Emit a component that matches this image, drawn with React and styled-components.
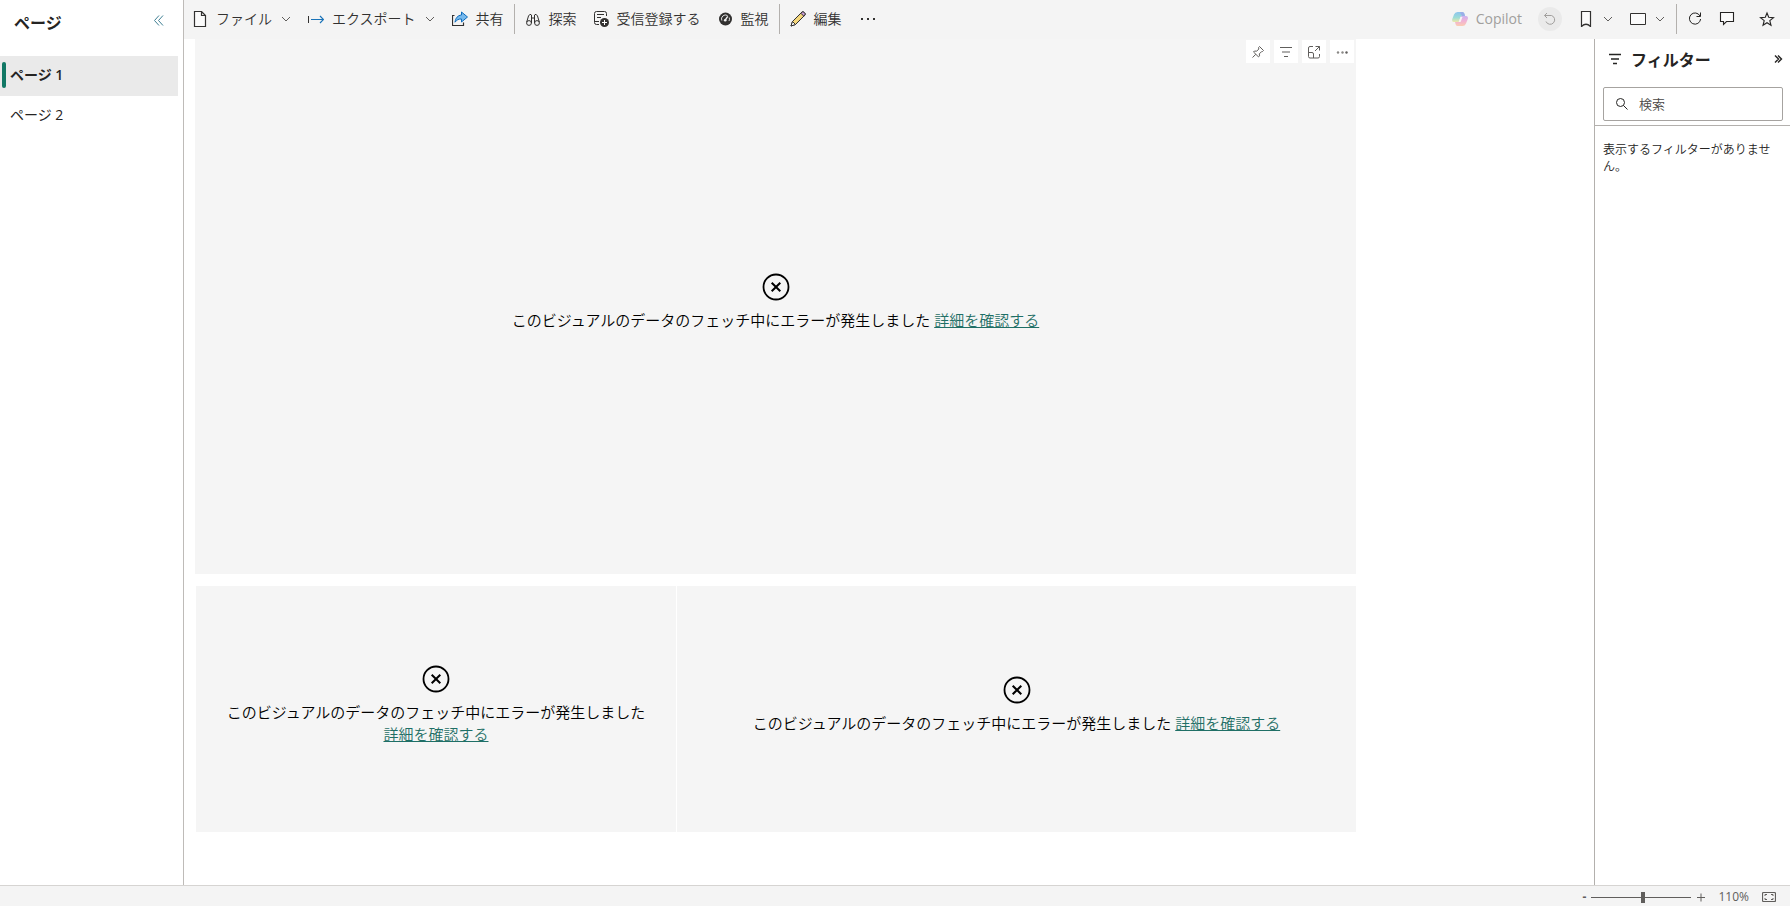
import React from "react";
import styled, { createGlobalStyle, css } from "styled-components";

const GlobalStyle = createGlobalStyle`
  * { box-sizing: border-box; }
  body {
    margin: 0;
    background: #fff;
    color: #252423;
    font-family: "Open Sans", "Noto Sans CJK JP", sans-serif;
    font-size: 14px;
    font-weight: 350;
    line-height: 20px;
  }
  button, input { font: inherit; color: inherit; }
  button { border: 0; padding: 0; background: none; cursor: pointer; }
  svg { display: block; flex: none; }
`;

const Page = styled.div`
  display: flex;
  flex-direction: column;
  min-height: 100vh;
`;

const Body = styled.div`
  display: flex;
  flex: 1;
`;

const Sidebar = styled.nav`
  flex: none;
  width: 184px;
  border-right: 1px solid #bebbb8;
`;

const SidebarHeader = styled.div`
  display: flex;
  align-items: center;
  justify-content: space-between;
  height: 40px;
  margin-bottom: 16px;
  padding: 6px 18px 0 14px;
`;

const SidebarTitle = styled.h2`
  margin: 0;
  font-size: 16px;
  line-height: 24px;
  font-weight: 700;
`;

const PlainButton = styled.button`
  display: flex;
  align-items: center;
  color: ${(p) => p.$color || "#252423"};
  font-weight: ${(p) => (p.$bold ? 700 : "inherit")};
`;

const PageTab = styled.button`
  display: flex;
  align-items: center;
  position: relative;
  width: 178px;
  height: 40px;
  padding: 0 10px 2px;
  font-size: 14px;
  font-weight: 400;
  ${(p) =>
    p.$active &&
    css`
      background: #eaeaea;
      font-weight: 600;
      &::before {
        content: "";
        position: absolute;
        left: 2px;
        top: 6px;
        width: 4px;
        height: 26px;
        border-radius: 2px;
        background: #117865;
      }
    `}
`;

const Main = styled.div`
  display: flex;
  flex: 1;
  flex-direction: column;
  min-width: 0;
`;

const Toolbar = styled.header`
  display: flex;
  align-items: center;
  justify-content: space-between;
  height: 39px;
  padding: 0 7px 1px 0;
  background: #f4f4f4;
`;

const ToolGroup = styled.div`
  display: flex;
  align-items: center;
  height: 38px;
  white-space: nowrap;
`;

const ToolButton = styled.button`
  display: flex;
  align-items: center;
  gap: 8px;
  height: 32px;
  padding: 0 8px;
  color: ${(p) => (p.$muted ? "#a19f9d" : "#323130")};
  font-weight: ${(p) => (p.$muted ? 400 : "inherit")};
`;

const IconButton = styled.button`
  display: flex;
  align-items: center;
  justify-content: center;
  width: 32px;
  height: 32px;
  margin-left: ${(p) => (p.$apart ? "8px" : "0")};
`;

const ResetButton = styled.button`
  display: flex;
  align-items: center;
  justify-content: center;
  width: 24px;
  height: 24px;
  margin: 0 8px;
  border-radius: 50%;
  background: #eaeaea;
  color: #a19f9d;
`;

const Divider = styled.span`
  width: 1px;
  height: 30px;
  margin: 0 2px;
  background: #b3b0ad;
`;

const Workspace = styled.div`
  display: flex;
  flex: 1;
`;

const Canvas = styled.main`
  display: grid;
  flex: 1;
  grid-template-rows: 535fr 246fr;
  gap: 12px;
  min-width: 0;
  padding: 0 238px 53px 11px;
`;

const VisualRow = styled.div`
  display: grid;
  grid-template-columns: 480fr 679fr;
  gap: 1px;
  padding-left: 1px;
`;

const VisualFrame = styled.section`
  position: relative;
  display: flex;
  flex-direction: column;
  align-items: center;
  justify-content: center;
  gap: 8px;
  min-width: 0;
  padding: 0 20px 9px;
  background: #f5f5f5;
  color: #000;
`;

const ErrorText = styled.p`
  margin: 0;
  font-size: 15px;
  line-height: 22px;
  text-align: center;
`;

const DetailLink = styled.a`
  display: inline-block;
  color: #1f6f66;
  text-decoration: underline;
`;

const VisualActions = styled.div`
  position: absolute;
  top: 1px;
  right: 2px;
  display: flex;
  gap: 4px;
`;

const VisualAction = styled.button`
  display: flex;
  align-items: center;
  justify-content: center;
  width: 24px;
  height: 23px;
  background: #fff;
  color: #605e5c;
`;

const FilterPane = styled.aside`
  flex: none;
  width: 196px;
  border-left: 1px solid #b3b0ad;
`;

const FilterHeader = styled.div`
  display: flex;
  align-items: center;
  gap: 9px;
  height: 40px;
  padding: 0 7px 0 13px;
`;

const FilterTitle = styled.h2`
  flex: 1;
  margin: 0;
  padding-top: 2px;
  font-size: 16px;
  line-height: 24px;
  font-weight: 700;
`;

const SearchArea = styled.div`
  padding: 8px 7px 4px 8px;
  border-bottom: 1px solid #b3b0ad;
`;

const SearchBox = styled.label`
  display: flex;
  align-items: center;
  gap: 10px;
  height: 34px;
  padding: 0 11px;
  border: 1px solid #a6a3a0;
  border-radius: 2px;
`;

const SearchInput = styled.input`
  width: 100%;
  min-width: 0;
  padding: 0;
  border: 0;
  outline: 0;
  background: none;
  font-size: 13px;
  &::placeholder { color: #484644; opacity: 1; }
`;

const FilterNote = styled.p`
  margin: 0;
  padding: 15px 9px 0 8px;
  font-size: 12px;
  line-height: 17px;
`;

const StatusBar = styled.footer`
  display: flex;
  align-items: center;
  justify-content: flex-end;
  height: 21px;
  padding: 2px 14px 0 0;
  border-top: 1px solid #d6d4d2;
  background: #f4f4f4;
  color: #605e5c;
  font-size: 12px;
  font-weight: 400;
  line-height: 18px;
`;

const ZoomSlider = styled.input`
  appearance: none;
  width: 100px;
  height: 11px;
  margin: 0 5px;
  background: transparent;
  &::-webkit-slider-runnable-track {
    height: 1px;
    background: #605e5c;
  }
  &::-webkit-slider-thumb {
    appearance: none;
    width: 4px;
    height: 11px;
    margin-top: -5px;
    background: #605e5c;
  }
`;

const ZoomValue = styled.span`
  margin: 0 13px 0 12px;
`;

function Icon({ size = 16, width, height, box, children }) {
  return (
    <svg
      width={width || size}
      height={height || size}
      viewBox={box || `0 0 ${width || size} ${height || size}`}
      fill="none"
      stroke="currentColor"
      aria-hidden="true"
    >
      {children}
    </svg>
  );
}

const Chevron = () => (
  <Icon size={12}><path d="M2 4l4 4 4-4" stroke="#605e5c" /></Icon>
);
const FileIcon = () => (
  <Icon><path d="M2.500.5h7l4 4v11h-11zM9.500.5v4h4" fill="#fff" fillOpacity=".6" strokeWidth="1.200" /></Icon>
);
const ExportIcon = () => (
  <Icon>
    <path d="M.5 5v7" />
    <path d="M3 8.500h12M12 5l3.500 3.500L12 12" stroke="#1a73b8" strokeWidth="1.200" />
  </Icon>
);
const ShareIcon = () => (
  <Icon>
    <path d="M2.500 4.500h-2v10h11v-3" strokeWidth="1.200" />
    <path d="M9.500 1l6 5-6 5V8C6.500 7.800 4.800 9 3 11.200 3.500 7 5.700 4.400 9.500 4z" fill="#76b9ed" stroke="#0f6cbd" />
  </Icon>
);
const ExploreIcon = () => (
  <Icon>
    <path d="M3.500 5Q5 2 6.500 4v3h3V4Q11 2 12.500 5l1.800 6M3.500 5L1.700 11M6.500 7v5M9.500 7v5" />
    <circle cx="4" cy="12" r="2.400" /><circle cx="12" cy="12" r="2.400" />
  </Icon>
);
const SubscribeIcon = () => (
  <Icon>
    <path d="M6 13.500H3.500Q1.500 13.500 1.500 11.500V2.500Q1.500.5 3.500.5h8q2 0 2 2V5M4 3.500h7M4 6.500h4M1.500 10.500H6" />
    <circle cx="11.500" cy="11.500" r="4.500" fill="currentColor" stroke="none" />
    <path d="M11.500 9v5M9 11.500h5" stroke="#fff" />
  </Icon>
);
const MonitorIcon = () => (
  <Icon>
    <circle cx="8.500" cy="8" r="6.500" fill="currentColor" stroke="none" />
    <path d="M4.800 9.500A4 4 0 0 1 10.500 4.500M12.200 6.500A4 4 0 0 1 12 10" stroke="#f4f4f4" strokeWidth=".9" />
    <path d="M8.200 9l2.600-3.600" stroke="#f4f4f4" strokeWidth="1.300" />
    <circle cx="8.200" cy="9.200" r="1.300" fill="#f4f4f4" stroke="none" />
  </Icon>
);
const PencilIcon = () => (
  <Icon>
    <path d="M1 15l1.500-4.500L11.800 1.200Q13 .2 14.400 1.600T14.800 4.200L5.500 13.500z" fill="#f5d77b" />
    <path d="M10.800 2.200L12 1Q13 .3 14.400 1.600T14.900 4L13.800 5.200z" fill="#cda0d8" />
    <path d="M1 15l1.500-4.500 3 3z" fill="#fff" />
  </Icon>
);
const Dots = ({ wide }) =>
  wide ? (
    <Icon width={20}>
      <g fill="currentColor" stroke="none"><rect x="3" y="7" width="2" height="2" /><rect x="9" y="7" width="2" height="2" /><rect x="15" y="7" width="2" height="2" /></g>
    </Icon>
  ) : (
    <Icon size={12}>
      <g fill="#8a8886" stroke="none"><circle cx="2" cy="6.500" r="1.200" /><circle cx="6.500" cy="6.500" r="1.200" /><circle cx="10.500" cy="6.500" r="1.200" fill="#605e5c" /></g>
    </Icon>
  );
const CopilotIcon = () => (
  <Icon>
    <defs>
      <linearGradient id="cool" x1="0" y1="0" x2="0" y2="1">
        <stop offset="0" stopColor="#8cc4ee" /><stop offset=".55" stopColor="#9cdcd6" /><stop offset="1" stopColor="#ece8a8" />
      </linearGradient>
      <linearGradient id="warm" x1="0" y1="0" x2="0" y2="1">
        <stop offset="0" stopColor="#ccb2f0" /><stop offset=".5" stopColor="#f1b2d5" /><stop offset="1" stopColor="#fbccb2" />
      </linearGradient>
    </defs>
    <g stroke="none">
      <path d="M5.500 1h4.800q1.500 0 2 1.600l.7 2.200H10q-1 0-1.400 1.200L7 11H2.200Q-.3 11 .2 8.300L2 3.500Q3 1 5.500 1z" fill="url(#cool)" />
      <path d="M9.300 5H14q2.400 0 1.900 2.700L14 12.500Q13 15 10.500 15H5.700q-1.500 0-2-1.600L3 11h3q1 0 1.400-1.200z" fill="url(#warm)" />
      <path d="M8 1h2.300q1.500 0 2 1.600L13 5h-3Q9 3.500 8 1z" fill="#9aaee8" />
      <path d="M8.500 6h2L8.600 11h-2z" fill="#f7f4f5" />
    </g>
  </Icon>
);
const ResetIcon = () => (
  <Icon size={14}><path d="M1.500 3.500H8.500A4.500 4.500 0 1 1 3 9.500M4 1L1.500 3.500 4 6" /></Icon>
);
const BookmarkIcon = () => (
  <Icon><path d="M3.500.5h9v15q-4.500-4.500-9 0z" strokeWidth="1.200" fill="#fff" fillOpacity=".6" /></Icon>
);
const ViewIcon = () => (
  <Icon><path d="M.5 2.500h15v11H.5z" fill="#fff" fillOpacity=".6" /></Icon>
);
const RefreshIcon = () => (
  <Icon><path d="M13 5A5.600 5.600 0 1 0 13.600 8M13.500 1.500V5.500H9.500" /></Icon>
);
const CommentIcon = () => (
  <Icon><path d="M1.500 1.500h13v9H7.500L4.500 13.500v-3h-3z" strokeWidth="1.100" fill="#fff" fillOpacity=".6" /></Icon>
);
const StarIcon = () => (
  <Icon><path d="M8 2l1.700 4.300 4.800.3-3.700 3 1.200 4.700L8 11.700l-4 2.600 1.200-4.700-3.700-3 4.800-.3z" strokeWidth="1.100" /></Icon>
);
const CollapseIcon = ({ small }) => (
  small
    ? <Icon size={10}><path d="M2 1.500L5.500 5 2 8.500M5 1.500L8.500 5 5 8.500" strokeWidth="1.400" /></Icon>
    : <Icon size={12} height={16} box="0 1 12 16"><path d="M6 1.500L1.500 6.500 6 11.500M10 1.500L5.500 6.500 10 11.500" /></Icon>
);
const PinIcon = () => (
  <Icon size={14}><path d="M8.500 1.500l4 4-1 1-1 .2-2.200 2.200.2 2-1 1L2.500 7l1-1 2.200.2L7.800 4l-.2-1.500zM4.800 9.300L1.500 12.500" /></Icon>
);
const FilterIcon = ({ bold }) => (
  <Icon size={14}><path d="M1 2.500h12M3 7h8M5 11.500h4" strokeWidth={bold ? 1.4 : 1} /></Icon>
);
const FocusIcon = () => (
  <Icon size={14}>
    <path d="M6 1.500H3Q1.500 1.500 1.500 3v8.500Q1.500 13 3 13h8q1.500 0 1.500-1.500V9M8.500 1.500h4v4M12.500 1.500L8 6M1.500 7.500H5Q6.500 7.500 6.500 9v4" />
  </Icon>
);
const SearchIcon = () => (
  <Icon size={14}><circle cx="5.500" cy="5.500" r="4" /><path d="M8.500 8.500L12.500 12.500" /></Icon>
);
const ErrorIcon = () => (
  <Icon size={28}>
    <circle cx="14" cy="14" r="12.500" strokeWidth="1.800" />
    <path d="M9.700 9.700l8.600 8.600M18.300 9.700l-8.600 8.600" strokeWidth="2" />
  </Icon>
);
const FitIcon = () => (
  <Icon size={14}>
    <rect x=".5" y="2.500" width="13" height="9" rx="1" strokeWidth="1.200" />
    <path d="M5 4.500H3V6M9 4.500h2V6M5 9.500H3V8M9 9.500h2V8" />
  </Icon>
);

function Visual({ actions }) {
  return (
    <VisualFrame>
      {actions && (
        <VisualActions>
          <VisualAction aria-label="ピン留め"><PinIcon /></VisualAction>
          <VisualAction aria-label="フィルター"><FilterIcon /></VisualAction>
          <VisualAction aria-label="フォーカス モード"><FocusIcon /></VisualAction>
          <VisualAction aria-label="その他のオプション"><Dots /></VisualAction>
        </VisualActions>
      )}
      <ErrorIcon />
      <ErrorText>
        このビジュアルのデータのフェッチ中にエラーが発生しました{" "}
        <DetailLink href="#details">詳細を確認する</DetailLink>
      </ErrorText>
    </VisualFrame>
  );
}

export default function App() {
  return (
    <Page lang="ja">
      <GlobalStyle />
      <Body>
        <Sidebar>
          <SidebarHeader>
            <SidebarTitle>ページ</SidebarTitle>
            <PlainButton $color="#3f7f93" aria-label="折りたたむ"><CollapseIcon /></PlainButton>
          </SidebarHeader>
          <PageTab $active>ページ 1</PageTab>
          <PageTab>ページ 2</PageTab>
        </Sidebar>
        <Main>
          <Toolbar>
            <ToolGroup>
              <ToolButton><FileIcon />ファイル<Chevron /></ToolButton>
              <ToolButton><ExportIcon />エクスポート<Chevron /></ToolButton>
              <ToolButton><ShareIcon />共有</ToolButton>
              <Divider />
              <ToolButton><ExploreIcon />探索</ToolButton>
              <ToolButton><SubscribeIcon />受信登録する</ToolButton>
              <ToolButton><MonitorIcon />監視</ToolButton>
              <Divider />
              <ToolButton><PencilIcon />編集</ToolButton>
              <ToolButton aria-label="その他"><Dots wide /></ToolButton>
            </ToolGroup>
            <ToolGroup>
              <ToolButton $muted><CopilotIcon />Copilot</ToolButton>
              <ResetButton aria-label="リセット"><ResetIcon /></ResetButton>
              <ToolButton aria-label="ブックマーク"><BookmarkIcon /><Chevron /></ToolButton>
              <ToolButton aria-label="表示"><ViewIcon /><Chevron /></ToolButton>
              <Divider />
              <IconButton aria-label="更新"><RefreshIcon /></IconButton>
              <IconButton aria-label="コメント"><CommentIcon /></IconButton>
              <IconButton $apart aria-label="お気に入り"><StarIcon /></IconButton>
            </ToolGroup>
          </Toolbar>
          <Workspace>
            <Canvas>
              <Visual actions />
              <VisualRow>
                <Visual />
                <Visual />
              </VisualRow>
            </Canvas>
            <FilterPane>
              <FilterHeader>
                <FilterIcon bold />
                <FilterTitle>フィルター</FilterTitle>
                <PlainButton aria-label="ウィンドウを閉じる"><CollapseIcon small /></PlainButton>
              </FilterHeader>
              <SearchArea>
                <SearchBox>
                  <SearchIcon />
                  <SearchInput type="text" placeholder="検索" aria-label="検索" />
                </SearchBox>
              </SearchArea>
              <FilterNote>表示するフィルターがありません。</FilterNote>
            </FilterPane>
          </Workspace>
        </Main>
      </Body>
      <StatusBar>
        <PlainButton $bold $color="#605e5c" aria-label="縮小">-</PlainButton>
        <ZoomSlider type="range" min="0" max="100" defaultValue="52" aria-label="ズーム" />
        <PlainButton $color="#605e5c" aria-label="拡大">
          <Icon size={10}><path d="M1 5.500h8M5 1.500v8" /></Icon>
        </PlainButton>
        <ZoomValue>110%</ZoomValue>
        <PlainButton $color="#605e5c" aria-label="ページに合わせる"><FitIcon /></PlainButton>
      </StatusBar>
    </Page>
  );
}
